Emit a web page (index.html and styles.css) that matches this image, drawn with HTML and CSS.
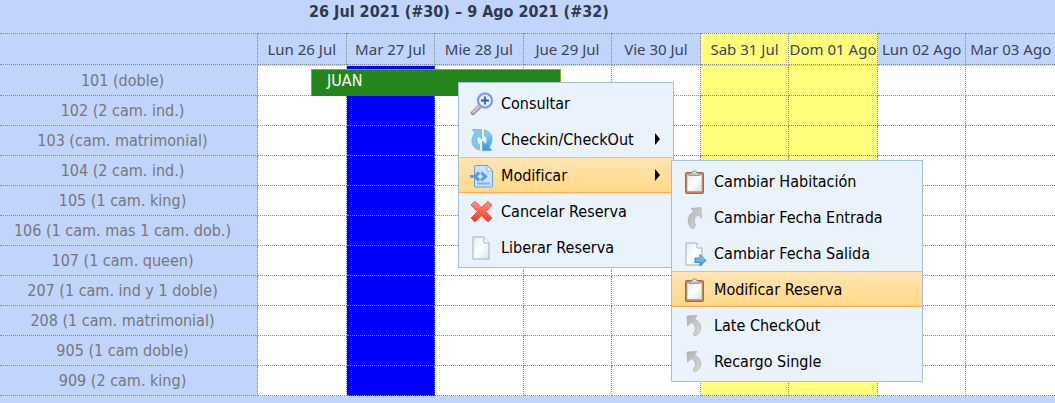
FILE: index.html
```
<!DOCTYPE html>
<html lang="es">
<head>
  <meta charset="UTF-8">
  <meta name="viewport" content="width=device-width, initial-scale=1">
  <title>Reservas</title>
  <link rel="stylesheet" href="styles.css">
</head>
<body>
  <!-- Calendario -->
  <table class="calendar">
    <caption>26 Jul 2021 (#30) – 9 Ago 2021 (#32)</caption>
    <thead>
      <tr>
        <th class="room-col"></th>
        <th>Lun 26 Jul</th>
        <th>Mar 27 Jul</th>
        <th>Mie 28 Jul</th>
        <th>Jue 29 Jul</th>
        <th>Vie 30 Jul</th>
        <th class="weekend">Sab 31 Jul</th>
        <th class="weekend">Dom 01 Ago</th>
        <th>Lun 02 Ago</th>
        <th>Mar 03 Ago</th>
      </tr>
    </thead>
    <tbody>
      <tr>
        <th scope="row">101 (doble)</th>
        <td class="has-event"><div class="event">JUAN</div></td>
        <td class="today"></td><td></td><td></td><td></td><td class="weekend"></td><td class="weekend"></td><td></td><td></td>
      </tr>
      <tr><th scope="row">102 (2 cam. ind.)</th><td></td><td class="today"></td><td></td><td></td><td></td><td class="weekend"></td><td class="weekend"></td><td></td><td></td></tr>
      <tr><th scope="row">103 (cam. matrimonial)</th><td></td><td class="today"></td><td></td><td></td><td></td><td class="weekend"></td><td class="weekend"></td><td></td><td></td></tr>
      <tr><th scope="row">104 (2 cam. ind.)</th><td></td><td class="today"></td><td></td><td></td><td></td><td class="weekend"></td><td class="weekend"></td><td></td><td></td></tr>
      <tr><th scope="row">105 (1 cam. king)</th><td></td><td class="today"></td><td></td><td></td><td></td><td class="weekend"></td><td class="weekend"></td><td></td><td></td></tr>
      <tr><th scope="row">106 (1 cam. mas 1 cam. dob.)</th><td></td><td class="today"></td><td></td><td></td><td></td><td class="weekend"></td><td class="weekend"></td><td></td><td></td></tr>
      <tr><th scope="row">107 (1 cam. queen)</th><td></td><td class="today"></td><td></td><td></td><td></td><td class="weekend"></td><td class="weekend"></td><td></td><td></td></tr>
      <tr><th scope="row">207 (1 cam. ind y 1 doble)</th><td></td><td class="today"></td><td></td><td></td><td></td><td class="weekend"></td><td class="weekend"></td><td></td><td></td></tr>
      <tr><th scope="row">208 (1 cam. matrimonial)</th><td></td><td class="today"></td><td></td><td></td><td></td><td class="weekend"></td><td class="weekend"></td><td></td><td></td></tr>
      <tr><th scope="row">905 (1 cam doble)</th><td></td><td class="today"></td><td></td><td></td><td></td><td class="weekend"></td><td class="weekend"></td><td></td><td></td></tr>
      <tr><th scope="row">909 (2 cam. king)</th><td></td><td class="today"></td><td></td><td></td><td></td><td class="weekend"></td><td class="weekend"></td><td></td><td></td></tr>
    </tbody>
  </table>

  <!-- Iconos compartidos -->
  <svg class="defs" width="0" height="0">
    <defs>
      <linearGradient id="paper" x1="0" y1="0" x2="1" y2="1">
        <stop offset="0" stop-color="#dcebea"/><stop offset=".5" stop-color="#fff"/><stop offset="1" stop-color="#cfe5e6"/>
      </linearGradient>
      <linearGradient id="blue" x1="0" y1="0" x2="0" y2="1">
        <stop offset="0" stop-color="#9bd3f5"/><stop offset="1" stop-color="#319bd8"/>
      </linearGradient>
      <linearGradient id="grey" x1="0" y1="0" x2="1" y2="1">
        <stop offset="0" stop-color="#b2b2b2"/><stop offset="1" stop-color="#dadada"/>
      </linearGradient>
      <linearGradient id="red" x1="0" y1="0" x2="0" y2="1">
        <stop offset="0" stop-color="#fa9784"/><stop offset="1" stop-color="#e83c20"/>
      </linearGradient>
    </defs>
    <symbol id="clipboard" viewBox="0 0 24 24">
      <rect x="2.500" y="2.500" width="18" height="21" rx="1" fill="#c08460" stroke="#a5694b"/>
      <path d="M4.500 5h14v16h-14z" fill="url(#paper)" stroke="#e8ddd6" stroke-width=".6"/>
      <path d="M6 5.500V3.500L9 3Q9 .8 11.500.8T14 3l3 .5v2z" fill="#c3c6cb" stroke="#8b8f96" stroke-width=".8"/>
      <path d="M10.500 2.500h2" stroke="#fff"/>
    </symbol>
    <symbol id="undo" viewBox="0 0 24 24">
      <path d="M4 2l10-.5-2.500 3.500C17.500 7.500 20.500 15 14.500 20.500l-3 1.500-1.500-2.500C14.500 16 12.500 11 8.500 8.500L4.500 12z" fill="url(#grey)" stroke="#aeaeae" stroke-width=".7" stroke-linejoin="round"/>
    </symbol>
  </svg>

  <!-- Menú contextual -->
  <ul class="menu context-menu">
    <li>
      <button type="button">
        <svg viewBox="0 0 24 24"><path d="M10 14l-7 7" stroke="#8d8d8d" stroke-width="4.500" stroke-linecap="round"/><path d="M9.500 14l-7 7" stroke="#c8c8c8" stroke-width="2.500"/><circle cx="15" cy="8.500" r="7" fill="#e7f1ff" stroke="#7593de" stroke-width="2"/><circle cx="15" cy="8.500" r="8" fill="none" stroke="#a9b8e6" stroke-width=".8"/><path d="M15 4.500v8M11 8.500h8" stroke="#3157c4" stroke-width="1.800"/></svg>
        Consultar
      </button>
    </li>
    <li>
      <button type="button">
        <svg viewBox="0 0 24 24"><path d="M2 1.500h9.500V11L8.500 8.200C6 10.500 6.500 14.500 9.500 16.500V22C1.500 20.500-.5 11.500 5 4.800z" fill="#83c5ee" stroke="#6bb2df" stroke-width=".7"/><path d="M22 22.500h-9.500V13l3 2.800C18 13.500 17.500 9.500 14.500 7.500V2C22.500 3.500 24.500 12.500 19 19.200z" fill="url(#blue)" stroke="#58a9d8" stroke-width=".7"/></svg>
        Checkin/CheckOut
        <span class="arrow"></span>
      </button>
    </li>
    <li class="active">
      <button type="button">
        <svg viewBox="0 0 24 24"><path d="M5.500 1.500h12l5 5V22q0 1-1 1h-16q-1 0-1-1V2.500q0-1 1-1z" fill="#c8e2fa" stroke="#669ddd"/><path d="M17 2v5h5" fill="#edf7ff" stroke="#8fbbea"/><path d="M7 19.500h13" stroke="#7cb1eb" stroke-width="2"/><path d="M8 7.500l-6 5 6 5 2.500-2-3-3 3-3zM12 7.500l6 5-6 5-2-2 3-3-3-3z" fill="#5a98e2" stroke="#a9cdf5" stroke-width=".5"/><path d="M0 11h5v3H0z" fill="#609fe4"/></svg>
        Modificar
        <span class="arrow"></span>
      </button>
      <ul class="menu submenu">
        <li>
          <button type="button"><svg><use href="#clipboard"/></svg>Cambiar Habitación</button>
        </li>
        <li>
          <button type="button"><svg viewBox="0 0 24 24"><path d="M8 2.500l10-1L18.500 12 15 9C12 10.500 10 14 12.500 19L11 22H8C3 16 5 8 11 5.500z" fill="url(#grey)" stroke="#aeaeae" stroke-width=".7" stroke-linejoin="round"/></svg>Cambiar Fecha Entrada</button>
        </li>
        <li>
          <button type="button"><svg viewBox="0 0 24 24"><path d="M3 1h11l5 5v17H3z" fill="url(#paper)" stroke="#9cb4b7"/><path d="M14 1v5h5" fill="#fff" stroke="#9cb4b7"/><path d="M12 16h5v-3.500l6 6-6 5.500v-3.500h-5z" fill="url(#blue)" stroke="#2a7fc0" stroke-width=".8"/></svg>Cambiar Fecha Salida</button>
        </li>
        <li class="active">
          <button type="button"><svg><use href="#clipboard"/></svg>Modificar Reserva</button>
        </li>
        <li>
          <button type="button"><svg><use href="#undo"/></svg>Late CheckOut</button>
        </li>
        <li>
          <button type="button"><svg><use href="#undo"/></svg>Recargo Single</button>
        </li>
      </ul>
    </li>
    <li>
      <button type="button">
        <svg viewBox="0 0 24 24"><path d="M5 1.500l6.500 6 6.500-6L22 5l-6 6.500 6 6.500-4 4-6.500-6.500L5 22l-4-4 6.500-6.500L1 5z" fill="url(#red)" stroke="#dd5742" stroke-linejoin="round"/></svg>
        Cancelar Reserva
      </button>
    </li>
    <li>
      <button type="button">
        <svg viewBox="0 0 24 24"><path d="M3 1h11l5 6v16H3z" fill="url(#paper)" stroke="#9cb4b7"/><path d="M14 1v6h5" fill="#fff" stroke="#9cb4b7"/></svg>
        Liberar Reserva
      </button>
    </li>
  </ul>
</body>
</html>
```
FILE: styles.css
```
body { margin: 0; background: #c1d4fc; font-family: "DejaVu Sans Condensed", Tahoma, sans-serif; font-size: 16px; line-height: 24px; }

.calendar { width: 100%; table-layout: fixed; border-collapse: separate; border-spacing: 0; }
.calendar caption { box-sizing: border-box; height: 33px; padding-right: 13%; font-weight: bold; color: #2f3a4c; }
.calendar th, .calendar td { box-sizing: border-box; height: 30px; padding: 0; border-right: 1px dotted #7d8899; border-bottom: 1px dotted #7d8899; }
.calendar th { font-weight: normal; white-space: nowrap; }
.calendar td { background: #fff; }
.calendar tr > :last-child { border-right: none; }
.calendar thead th { height: 32px; border-top: 1px dotted #7d8899; color: #3a4558; font-family: "Noto Sans", sans-serif; font-size: 15px; }
.calendar .room-col { width: 258px; }
.calendar tbody th { padding-right: 12px; color: #777; }
.calendar tbody tr:first-child > * { height: 31px; border-top: 1px solid #c1d4fc; }
.calendar .weekend { background: #ffff7b; }
.calendar .today { background: #0000ff; }

.has-event { position: relative; }
.event { position: absolute; top: 3px; left: 53px; z-index: 1; box-sizing: border-box; width: 250px; height: 27px; padding-left: 15px; background: #22861a; border: 1px solid #a39a2c; border-bottom: none; color: #fff; line-height: 22px; }

.defs { position: absolute; }

.menu { position: absolute; box-sizing: border-box; margin: 0; padding: 2px 0; list-style: none; background: #eaf2fb; border: 1px solid #a3bfd9; }
.menu li { position: relative; }
.menu button { display: flex; align-items: center; box-sizing: border-box; width: 100%; height: 36px; padding: 2px 13px 0 11px; gap: 7px; background: none; border: 1px solid transparent; border-width: 1px 0; font: inherit; color: #000; white-space: nowrap; }
.menu svg { width: 24px; height: 24px; flex: none; }
.menu .active > button { background: linear-gradient(#ffe5b3, #ffd987); border-color: #fdc04f transparent #ffa94d; }
.arrow { margin-left: auto; margin-bottom: 2px; border: 6px solid transparent; border-left: 5px solid #000; border-right: none; }
.context-menu { top: 82px; left: 458px; z-index: 2; width: 216px; }
.submenu { top: 3px; left: 212px; width: 252px; }
```
